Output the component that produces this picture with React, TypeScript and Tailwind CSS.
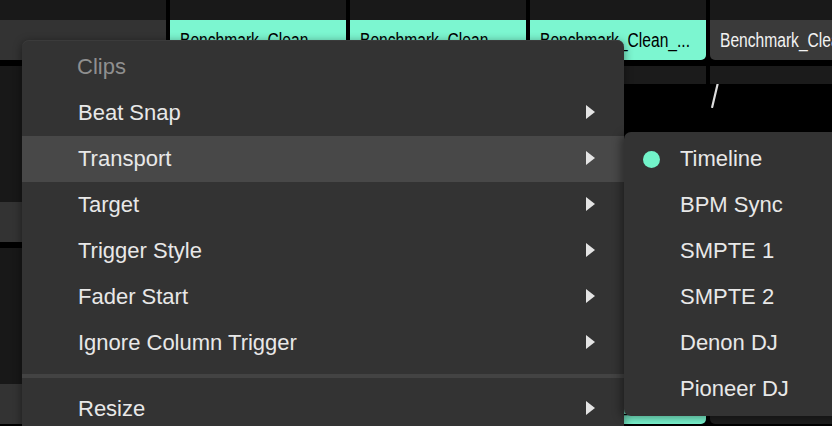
import React from "react";

type Clip = { name: string; active?: boolean } | null;

const ROWS: Clip[][] = [
  [
    { name: "Benchmark_Clean_...", active: true },
    { name: "Benchmark_Clean_...", active: true },
    { name: "Benchmark_Clean_...", active: true },
    { name: "Benchmark_Clean_Loop" },
  ],
  [null, null, null, null],
  [null, null, { name: "Benchmark_Clean_...", active: true }, null],
];

const MENU_ITEMS = ["Beat Snap", "Transport", "Target", "Trigger Style", "Fader Start", "Ignore Column Trigger"];
const TRANSPORTS = ["Timeline", "BPM Sync", "SMPTE 1", "SMPTE 2", "Denon DJ", "Pioneer DJ"];

const Arrow = () => (
  <svg width="9" height="14" viewBox="0 0 9 14" className="shrink-0">
    <path d="M0 0 L9 7 L0 14 Z" fill="#e4e4e4" />
  </svg>
);

const ClipCell = ({ clip }: { clip: Clip }) => {
  if (!clip) return <div className="w-[176px] shrink-0 rounded-b-[5px] bg-[#1e1e1e]" />;
  return (
    <div
      className={`w-[176px] shrink-0 rounded-b-[5px] pl-[10px] flex items-center overflow-hidden whitespace-nowrap text-[20px] ${
        clip.active ? "bg-[#7cf6d0] text-black" : "bg-[#3a3a3a] text-[#f2f2f2]"
      }`}
    >
      {/* narrow label face: squeeze the regular face horizontally */}
      <span className="inline-block origin-left scale-x-[0.78]">{clip.name}</span>
    </div>
  );
};

const DeckRow = ({ clips, showSlash }: { clips: Clip[]; showSlash?: boolean }) => (
  <div className="flex flex-col">
    <div className="flex h-[40px] gap-[4px] bg-black">
      <div className="w-[166px] shrink-0 bg-[#333333]" />
      {clips.map((c, i) => (
        <ClipCell key={i} clip={c} />
      ))}
    </div>
    <div className="h-[6px] bg-black" />
    <div className="flex h-[136px] gap-[4px] bg-black">
      <div className="w-[166px] shrink-0 bg-[#181818]" />
      {clips.map((_, i) => (
        <div key={i} className="w-[176px] shrink-0 flex flex-col">
          <div className="h-[18px] bg-[#1b1b1b]" />
          <div className="flex-1 bg-black pl-[1px]">
            {showSlash && i === 3 && (
              <svg width="8" height="26" viewBox="0 0 8 26" className="block">
                <line x1="6.5" y1="0.5" x2="1.2" y2="23" stroke="#dcdcdc" strokeWidth="2.2" strokeLinecap="round" />
              </svg>
            )}
          </div>
        </div>
      ))}
    </div>
  </div>
);

export default function App() {
  return (
    <div className="relative w-[832px] h-[426px] overflow-hidden bg-black font-['Liberation_Sans',Arial,sans-serif]">
      {/* top strip */}
      <div className="flex h-[20px] gap-[4px] bg-black">
        <div className="w-[166px] shrink-0 bg-[#191919]" />
        {[0, 1, 2, 3].map((i) => (
          <div key={i} className="w-[176px] shrink-0 bg-[#191919]" />
        ))}
      </div>
      {ROWS.map((r, i) => (
        <DeckRow key={i} clips={r} showSlash={i === 0} />
      ))}

      {/* context menu */}
      <div className="absolute left-[22px] top-[40px] w-[602px] rounded-[7px] bg-[#333333] py-[4px] text-[22px] text-[#e8e8e8] shadow-[0_2px_10px_rgba(0,0,0,0.45),inset_0_1px_0_#3b3b3b]">
        <div className="h-[46px] flex items-center pl-[55px] pb-[2px] text-[#8f8f8f]">Clips</div>
        {MENU_ITEMS.map((item) => (
          <div
            key={item}
            className={`h-[46px] flex items-center justify-between pl-[56px] pr-[29px] pb-[2px] ${item === "Transport" ? "bg-[#484848]" : ""}`}
          >
            <span>{item}</span>
            <Arrow />
          </div>
        ))}
        <div className="py-[8px]">
          <div className="h-[4px] bg-[#434343]" />
        </div>
        <div className="h-[46px] flex items-center justify-between pl-[56px] pr-[29px] pb-[2px]">
          <span>Resize</span>
          <Arrow />
        </div>
      </div>

      {/* transport submenu */}
      <div className="absolute left-[624px] top-[132px] w-[260px] rounded-[7px] bg-[#333333] py-[4px] text-[22px] text-[#e8e8e8] shadow-[-3px_2px_10px_rgba(0,0,0,0.4)]">
        {TRANSPORTS.map((t, i) => (
          <div key={t} className="h-[46px] flex items-center pb-[2px]">
            <div className="w-[56px] shrink-0 flex items-center pl-[19px] pt-[2px]">
              {i === 0 && <div className="w-[17px] h-[17px] rounded-full bg-[#72f3c9]" />}
            </div>
            <span>{t}</span>
          </div>
        ))}
      </div>
    </div>
  );
}
